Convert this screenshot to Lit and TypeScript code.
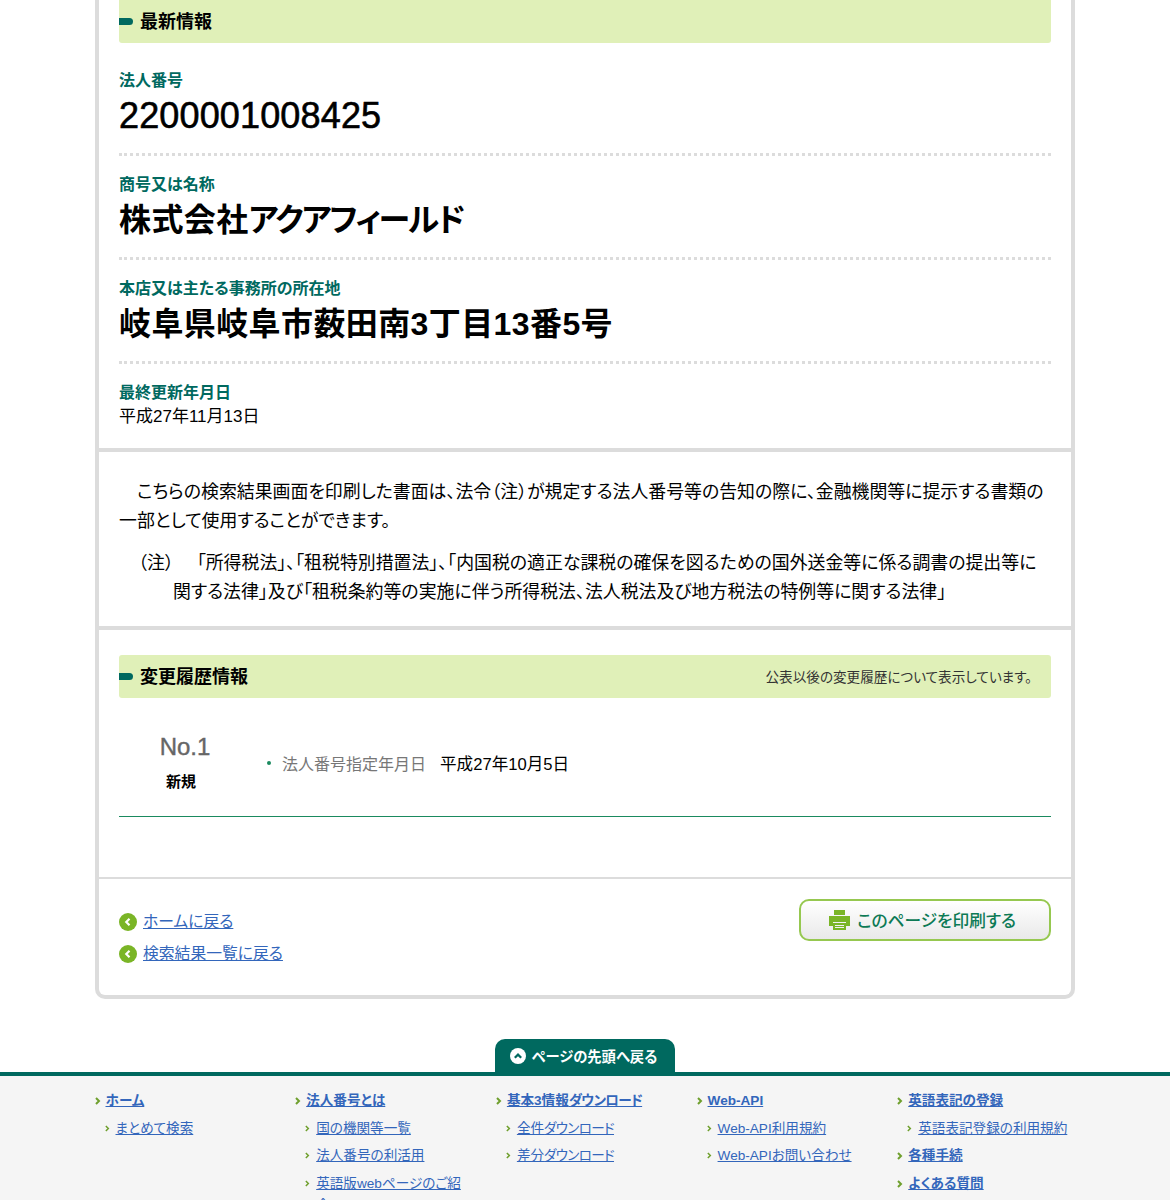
import { LitElement, html, css, svg } from "lit";
import { customElement } from "lit/decorators.js";

const chev = svg`<svg class="chev" viewBox="0 0 6 8" width="6" height="8"><path d="M1 1l3 3-3 3" fill="none" stroke="#6f9f2d" stroke-width="2"/></svg>`;
const chevSm = svg`<svg class="chev" viewBox="0 0 6 8" width="5" height="7"><path d="M1 1l3 3-3 3" fill="none" stroke="#6f9f2d" stroke-width="1.8"/></svg>`;
const dl = html`<span class="dl">ダウンロード</span>`;

@customElement("app-root")
export class AppRoot extends LitElement {
  static styles = css`
    :host {
      display: block;
      height: 1200px;
      overflow: hidden;
      background: #fff;
      color: #000;
      font-family: "Liberation Sans", "Noto Sans CJK JP", sans-serif;
      font-feature-settings: "palt";
      font-size: 16px;
    }
    a { color: #3366bb; text-decoration: underline; }
    .dl { letter-spacing: -0.7px; }
    .card {
      width: 980px;
      box-sizing: border-box;
      margin: 0 auto;
      border: 4px solid #dcdcdc;
      border-top: 0;
      border-radius: 0 0 10px 10px;
    }
    .sec { padding: 0 20px; }
    .sec + .sec { border-top: 4px solid #dcdcdc; }
    .band {
      height: 43px;
      box-sizing: border-box;
      padding-bottom: 3px;
      background: #e0f0b8;
      border-radius: 3px;
      display: flex;
      align-items: center;
      gap: 7px;
      font-size: 18px;
      font-weight: 700;
    }
    .band.first { border-radius: 0 0 3px 3px; }
    .band::before {
      content: "";
      margin-top: 3px;
      width: 14px;
      height: 7px;
      background: #00695f;
      border-radius: 0 4px 4px 0;
      flex: none;
    }
    .band .note {
      margin-left: auto;
      margin-right: 19px;
      margin-top: 2px;
      font-size: 13.6px;
      font-weight: 400;
      color: #333;
    }
    .item { height: 72px; padding-bottom: 13px; padding-top: 16px; border-bottom: 3px dotted #dcdcdc; }
    .item.first { padding-top: 25px; }
    .lab { font-size: 16px; font-weight: 700; color: #00695f; line-height: 26px; margin-bottom: -2px; }
    .val { font-size: 32px; font-weight: 700; line-height: 48px; letter-spacing: 0.4px; }
    .val.num { font-weight: 400; font-size: 36px; letter-spacing: 0.15px; -webkit-text-stroke: 0.6px #000; }
    .kana { letter-spacing: -1.9px; }
    .last { padding-top: 16px; height: 84px; box-sizing: border-box; }
    .last .date { font-size: 17px; line-height: 24px; padding-top: 1px; }
    .notice { padding-top: 26px; padding-bottom: 19px; }
    .notice p { margin: 0; font-size: 17.9px; line-height: 29px; text-indent: 18px; }
    .notice .fn { margin: 13px 0 0; padding-left: 54px; text-indent: -35px; }
    .notice .fn span { margin-right: 23px; }
    .hist { padding-top: 25px; padding-bottom: 60px; border-bottom: 2px solid #dcdcdc; }
    .row {
      display: flex;
      align-items: center;
      height: 119px;
      box-sizing: border-box;
      padding-top: 12px;
      border-bottom: 1px solid #1a8a5f;
    }
    .no { width: 124px; text-align: center; flex: none; padding-top: 2px; }
    .no b { display: block; font-size: 24px; font-weight: 400; -webkit-text-stroke: 0.4px #666; color: #666; line-height: 35px; padding-left: 8px; }
    .no span { display: block; font-size: 15px; font-weight: 700; line-height: 35px; }
    .info { margin-left: 24px; display: flex; align-items: center; font-size: 16px; }
    .dot { width: 4px; height: 4px; border-radius: 50%; background: #1a8a5f; margin-right: 11px; }
    .info .k { color: #777; margin-right: 14px; }
    .info .v { font-size: 16.6px; }
    .foot { padding: 20px 20px 0; height: 116px; box-sizing: border-box; display: flex; justify-content: space-between; border-top: 0 !important; }
    .back { display: flex; flex-direction: column; gap: 8px; padding-top: 11px; }
    .back a { display: flex; align-items: center; gap: 6px; font-size: 15.8px; line-height: 24px; }
    .print {
      width: 252px;
      height: 42px;
      box-sizing: border-box;
      border: 2px solid #96c850;
      border-radius: 10px;
      background: linear-gradient(#fff, #e9e9e9);
      display: flex;
      align-items: center;
      justify-content: center;
      gap: 7px;
      padding: 0 5px 1px 0;
      color: #0d7a55;
      font-size: 16.7px;
      font-weight: 500;
    }
    .topwrap { display: flex; justify-content: center; margin-top: 40px; }
    .top {
      width: 180px;
      height: 33px;
      box-sizing: border-box;
      padding-right: 3px;
      background: #00695f;
      border-radius: 10px 10px 0 0;
      color: #fff;
      display: flex;
      align-items: center;
      justify-content: center;
      gap: 6px;
      font-size: 14.3px;
      font-weight: 700;
    }
    footer {
      border-top: 4px solid #00695f;
      background: #f5f5f5;
      height: 200px;
      padding: 14px 0 0 94.5px;
      display: grid;
      grid-template-columns: repeat(5, 200.7px);
      font-size: 13.6px;
    }
    ul { list-style: none; margin: 0; padding: 0 25px 0 0; }
    li { position: relative; line-height: 21px; margin-bottom: 6.6px; }
    li .chev { position: absolute; left: 0; top: 7px; }
    li.h { padding-left: 11px; font-weight: 700; }
    li.s { padding-left: 21px; }
    li.s .chev { left: 10px; }
  `;

  private h(t: unknown) { return html`<li class="h">${chev}<a href="#">${t}</a></li>`; }
  private s(t: unknown) { return html`<li class="s">${chevSm}<a href="#">${t}</a></li>`; }

  render() {
    const backIcon = html`<svg width="18" height="18" viewBox="0 0 18 18"><circle cx="9" cy="9" r="9" fill="#7ab526"/><path d="M10.5 5.8L7.3 9l3.2 3.2" fill="none" stroke="#fff" stroke-width="2.2"/></svg>`;
    return html`
      <div class="card">
        <section class="sec">
          <div class="band first">最新情報</div>
          <div class="item first"><div class="lab">法人番号</div><div class="val num">2200001008425</div></div>
          <div class="item"><div class="lab">商号又は名称</div><div class="val">株式会社<span class="kana">アクアフィールド</span></div></div>
          <div class="item"><div class="lab">本店又は主たる事務所の所在地</div><div class="val">岐阜県岐阜市薮田南3丁目13番5号</div></div>
          <div class="last"><div class="lab">最終更新年月日</div><div class="date">平成27年11月13日</div></div>
        </section>
        <section class="sec notice">
          <p>こちらの検索結果画面を印刷した書面は、法令（注）が規定する法人番号等の告知の際に、金融機関等に提示する書類の一部として使用することができます。</p>
          <p class="fn"><span>（注）</span>「所得税法」、「租税特別措置法」、「内国税の適正な課税の確保を図るための国外送金等に係る調書の提出等に関する法律」及び「租税条約等の実施に伴う所得税法、法人税法及び地方税法の特例等に関する法律」</p>
        </section>
        <section class="sec hist">
          <div class="band">変更履歴情報<span class="note">公表以後の変更履歴について表示しています。</span></div>
          <div class="row">
            <div class="no"><b>No.1</b><span>新規</span></div>
            <div class="info"><i class="dot"></i><span class="k">法人番号指定年月日</span><span class="v">平成27年10月5日</span></div>
          </div>
        </section>
        <section class="sec foot">
          <div class="back">
            <a href="#">${backIcon}<span>ホームに戻る</span></a>
            <a href="#">${backIcon}<span>検索結果一覧に戻る</span></a>
          </div>
          <div class="print">
            <svg width="21" height="20" viewBox="0 0 21 20"><path fill="#7ab526" d="M5 0h11v5H5zM0 6h21v10h-4v-4H4v4H0z"/><path fill="#7ab526" d="M4 13h13v7H4zm2 2v1h9v-1zm0 2v1h9v-1z" fill-rule="evenodd"/></svg>
            <span>このページを印刷する</span>
          </div>
        </section>
      </div>
      <div class="topwrap"><div class="top">
        <svg width="16" height="16" viewBox="0 0 16 16"><circle cx="8" cy="8" r="8" fill="#fff"/><path d="M4.8 9.8L8 6.6l3.2 3.2" fill="none" stroke="#00695f" stroke-width="2.2"/></svg>
        <span>ページの先頭へ戻る</span></div></div>
      <footer>
        <ul>${this.h("ホーム")}${this.s("まとめて検索")}</ul>
        <ul>${this.h("法人番号とは")}${this.s("国の機関等一覧")}${this.s("法人番号の利活用")}${this.s("英語版webページのご紹介")}</ul>
        <ul>${this.h(html`基本3情報${dl}`)}${this.s(html`全件${dl}`)}${this.s(html`差分${dl}`)}</ul>
        <ul>${this.h("Web-API")}${this.s("Web-API利用規約")}${this.s("Web-APIお問い合わせ")}</ul>
        <ul>${this.h("英語表記の登録")}${this.s("英語表記登録の利用規約")}${this.h("各種手続")}${this.h("よくある質問")}</ul>
      </footer>
    `;
  }
}
